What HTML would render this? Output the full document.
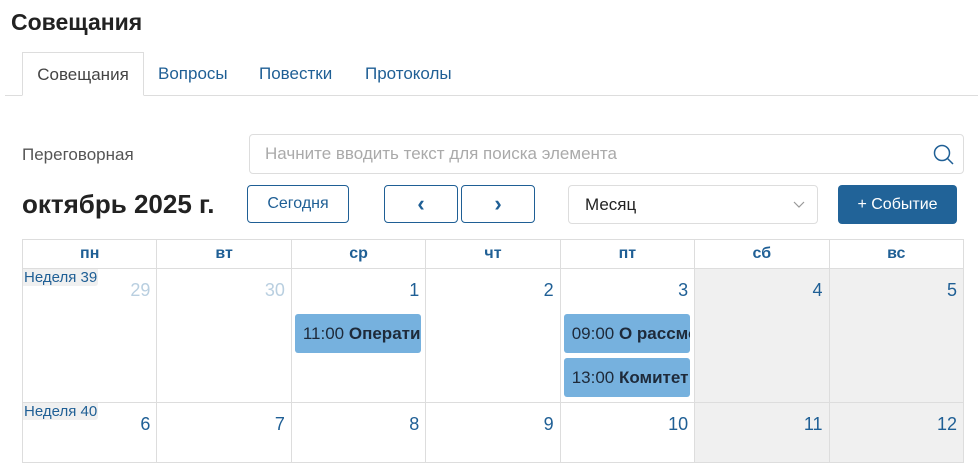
<!DOCTYPE html>
<html><head><meta charset="utf-8"><style>
*{box-sizing:border-box;margin:0;padding:0}
body{width:978px;height:451px;overflow:hidden;background:#fff;font-family:"Liberation Sans",sans-serif;position:relative;color:#222}
.a{position:absolute}
.h1{left:11px;top:9px;font-size:23px;font-weight:bold;color:#222}
.tab{top:52px;height:44px;font-size:17px;color:#1f5f95;line-height:44px}
.btn{border:1px solid #1f5f95;border-radius:4px;color:#1f5f95;text-align:center;top:185px;height:38px;line-height:36px;font-size:16px}
table{position:absolute;left:22px;top:239px;border-collapse:collapse;table-layout:fixed;width:942px}
td{border:1px solid #ddd;vertical-align:top;position:relative;color:#1f5f95}
th{border:1px solid #ddd;height:29px;color:#1f5f95;font-size:16px;font-weight:bold}
.n{position:absolute;right:6px;top:11px;font-size:18px}
.wk{position:absolute;left:0;top:0;background:#f0f0f0;font-size:15px;color:#1f5f95;padding:0 1px;line-height:17px;border-radius:0 0 3px 0}
.we{background:#f0f0f0}
.ev{position:absolute;left:3px;width:126px;height:39px;background:#76b1de;border-radius:3px;font-size:17px;line-height:39px;padding-left:8px;white-space:nowrap;overflow:hidden;color:#1e2a3a}
</style></head><body>
<div class="a h1">Совещания</div>
<div class="a" style="left:5px;top:95px;width:973px;border-top:1px solid #ddd"></div>
<div class="a tab" style="left:22px;width:122px;border:1px solid #ddd;border-bottom:1px solid #fff;background:#fff;color:#444;text-align:center">Совещания</div>
<div class="a tab" style="left:158px">Вопросы</div>
<div class="a tab" style="left:259px">Повестки</div>
<div class="a tab" style="left:365px">Протоколы</div>
<div class="a" style="left:22px;top:145px;font-size:17px;color:#555">Переговорная</div>
<div class="a" style="left:249px;top:134px;width:715px;height:40px;border:1px solid #ddd;border-radius:4px;font-size:17px;color:#aaa;line-height:38px;padding-left:15px">Начните вводить текст для поиска элемента
<svg class="a" style="right:8px;top:9px" width="22" height="22" viewBox="0 0 22 22"><circle cx="9" cy="9" r="7.5" fill="none" stroke="#1f5f95" stroke-width="1.5"/><path d="M14.5 14.5L20 20" stroke="#1f5f95" stroke-width="1.5"/></svg></div>
<div class="a" style="left:22px;top:189px;font-size:26px;font-weight:bold;color:#222">октябрь 2025 г.</div>
<div class="a btn" style="left:247px;width:102px">Сегодня</div>
<div class="a btn" style="left:384px;width:74px;font-size:22px;font-weight:bold">‹</div>
<div class="a btn" style="left:461px;width:74px;font-size:22px;font-weight:bold">›</div>
<div class="a" style="left:568px;top:185px;width:250px;height:39px;border:1px solid #ddd;border-radius:4px;font-size:17px;line-height:37px;padding-left:16px;color:#222">Месяц
<svg class="a" style="right:12px;top:15px" width="12" height="8"><path d="M1 1l5 5 5-5" fill="none" stroke="#999" stroke-width="1.2"/></svg></div>
<div class="a" style="left:838px;top:185px;width:119px;height:39px;background:#216398;border-radius:4px;color:#fff;font-size:16px;text-align:center;line-height:39px">+ Событие</div>
<table>
<tr><th>пн</th><th>вт</th><th>ср</th><th>чт</th><th>пт</th><th>сб</th><th>вс</th></tr>
<tr style="height:134px">
<td><span class="wk">Неделя 39</span><span class="n" style="color:#b9cfe0">29</span></td>
<td><span class="n" style="color:#b9cfe0">30</span></td>
<td><span class="n">1</span><div class="ev" style="top:45px"><span>11:00 </span><b>Оперативка</b></div></td>
<td><span class="n">2</span></td>
<td><span class="n">3</span><div class="ev" style="top:45px">09:00 <b>О рассмотрении</b></div><div class="ev" style="top:89px">13:00 <b>Комитет</b></div></td>
<td class="we"><span class="n">4</span></td>
<td class="we"><span class="n">5</span></td>
</tr>
<tr style="height:60px">
<td><span class="wk">Неделя 40</span><span class="n">6</span></td>
<td><span class="n">7</span></td>
<td><span class="n">8</span></td>
<td><span class="n">9</span></td>
<td><span class="n">10</span></td>
<td class="we"><span class="n">11</span></td>
<td class="we"><span class="n">12</span></td>
</tr>
</table>
</body></html>
